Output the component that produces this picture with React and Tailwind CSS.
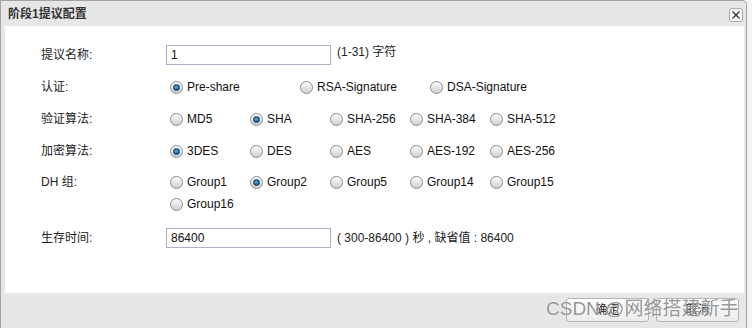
import React from "react";

function Radio({ checked }) {
  return (
    <span className="w-[13px] h-[13px] rounded-full border border-[#8a8a8a] bg-linear-to-b from-[#fdfdfd] to-[#cdcdcd] flex items-center justify-center shrink-0 shadow-[inset_0_0_1px_#fff]">
      {checked && (
        <span className="w-[7px] h-[7px] rounded-full border border-[#123c5e] bg-[radial-gradient(circle_at_45%_40%,#5db2e6,#0c5a92_70%)]" />
      )}
    </span>
  );
}

function Opt({ label, checked, w }) {
  return (
    <div className={`flex items-center gap-[4px] ${w}`}>
      <Radio checked={checked} />
      <span className="text-[#111]">{label}</span>
    </div>
  );
}

function Row({ label, children, h = "h-8", extra = "" }) {
  return (
    <div className={`flex ${h} ${extra}`}>
      <div className="w-[125px] flex items-center text-[#222]">{label}</div>
      <div className="flex items-center">{children}</div>
    </div>
  );
}

export default function App() {
  const algs = ["MD5", "SHA", "SHA-256", "SHA-384", "SHA-512"];
  const encs = ["3DES", "DES", "AES", "AES-192", "AES-256"];
  const groups1 = ["Group1", "Group2", "Group5", "Group14", "Group15"];
  return (
    <div className="w-[752px] h-[328px] bg-[#f3f3f3] flex relative overflow-hidden font-['Liberation_Sans','Noto_Sans_CJK_SC',sans-serif] text-[12px] leading-[14px]">
      <div className="w-[747px] h-[328px] flex flex-col bg-[#e7e7e7] border-l border-t border-r border-[#a3a3a3] rounded-tr-[5px]">
        <div className="h-[25px] flex items-center justify-between pl-[7px] pr-[3px]">
          <span className="font-bold text-[#333] text-[12px]">阶段1提议配置</span>
          <span className="w-[14px] h-[14px] mt-[2px] rounded-[3px] border border-[#a8a8a8] bg-[#f7f7f7] flex items-center justify-center">
            <svg width="10" height="10" viewBox="0 0 10 10">
              <path d="M1.5 1.5 L8.5 8.5 M8.5 1.5 L1.5 8.5" stroke="#333" strokeWidth="1.3" />
            </svg>
          </span>
        </div>
        <div className="ml-[4px] mr-[2px] h-[267px] bg-white pl-[36px] pt-[13px]">
          <Row label="提议名称:">
            <div className="flex items-start">
              <input
                readOnly
                value="1"
                className="w-[165px] h-[20px] border border-[#a9b0c8] pl-[4px] text-[12px] text-[#111] outline-none bg-white"
              />
              <span className="ml-[6px] text-[#222]">(1-31) 字符</span>
            </div>
          </Row>
          <Row label="认证:">
            <div className="flex pl-[4px]">
              <Opt label="Pre-share" checked w="w-[130px]" />
              <Opt label="RSA-Signature" w="w-[130px]" />
              <Opt label="DSA-Signature" w="w-[130px]" />
            </div>
          </Row>
          <Row label="验证算法:">
            <div className="flex pl-[4px]">
              {algs.map((a) => (
                <Opt key={a} label={a} checked={a === "SHA"} w="w-[80px]" />
              ))}
            </div>
          </Row>
          <Row label="加密算法:">
            <div className="flex pl-[4px]">
              {encs.map((a) => (
                <Opt key={a} label={a} checked={a === "3DES"} w="w-[80px]" />
              ))}
            </div>
          </Row>
          <div className="flex mt-[4px]">
            <div className="w-[125px] h-[22px] flex items-center text-[#222]">DH 组:</div>
            <div className="flex flex-col pl-[4px]">
              <div className="flex h-[22px] items-center">
                {groups1.map((a) => (
                  <Opt key={a} label={a} checked={a === "Group2"} w="w-[80px]" />
                ))}
              </div>
              <div className="flex h-[22px] items-center">
                <Opt label="Group16" w="w-[80px]" />
              </div>
            </div>
          </div>
          <Row label="生存时间:" extra="mt-[7px]">
            <div className="flex items-center">
              <input
                readOnly
                value="86400"
                className="w-[165px] h-[20px] border border-[#a9b0c8] pl-[4px] text-[12px] text-[#111] outline-none bg-white"
              />
              <span className="ml-[6px] text-[#222]">( 300-86400 ) 秒 , 缺省值 : 86400</span>
            </div>
          </Row>
        </div>
        <div className="flex-1 flex justify-end items-start pt-[5px] pr-[7px] gap-[7px]">
          <button className="w-[83px] h-[24px] rounded-[3px] border border-[#b4b4b4] bg-linear-to-b from-[#fdfdfd] to-[#ececec] text-[12px] text-[#222]">确定</button>
          <button className="w-[83px] h-[24px] rounded-[3px] border border-[#b4b4b4] bg-linear-to-b from-[#fdfdfd] to-[#ececec] text-[12px] text-[#222]">取消</button>
        </div>
      </div>
      <span className="absolute left-[546px] top-[298px] text-[19px] leading-[22px] text-[#8a8a8a]/90 whitespace-nowrap [text-shadow:0_0_1px_rgba(255,255,255,0.9)]">
        CSDN @网络搭建新手
      </span>
    </div>
  );
}
